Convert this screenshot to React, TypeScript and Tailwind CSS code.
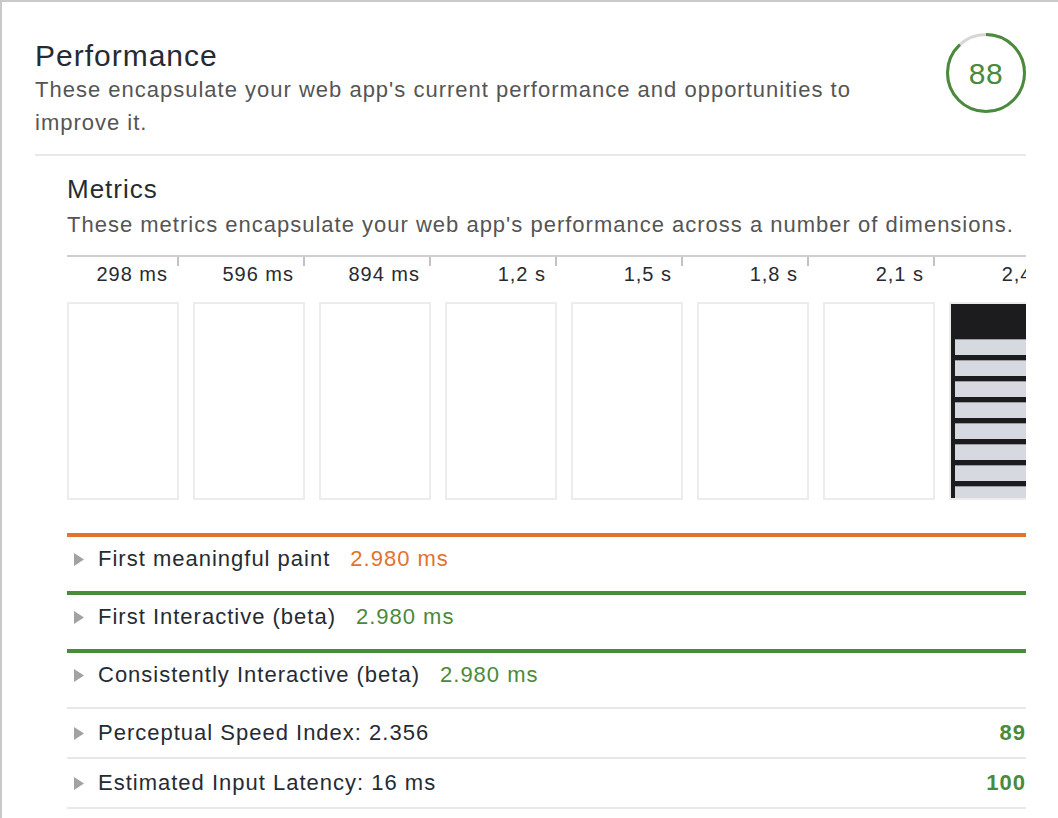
import React from 'react';

interface Row {
    label: string;
    value?: string;
    score?: string;
    bar?: 'orange' | 'green';
}

const ticks = ['298 ms', '596 ms', '894 ms', '1,2 s', '1,5 s', '1,8 s', '2,1 s', '2,4 s'];

const rows: Row[] = [
    { label: 'First meaningful paint', value: '2.980 ms', bar: 'orange' },
    { label: 'First Interactive (beta)', value: '2.980 ms', bar: 'green' },
    { label: 'Consistently Interactive (beta)', value: '2.980 ms', bar: 'green' },
    { label: 'Perceptual Speed Index: 2.356', score: '89' },
    { label: 'Estimated Input Latency: 16 ms', score: '100' },
];

function ScoreGauge({ score }: { score: number }) {
    const r = 38.5;
    const c = 2 * Math.PI * r;
    return (
        <div className="relative w-[80px] h-[80px] shrink-0">
            <svg width="80" height="80" viewBox="0 0 80 80" className="-rotate-90">
                <circle cx="40" cy="40" r={r} fill="none" stroke="#d6d6d6" strokeWidth="3" />
                <circle
                    cx="40"
                    cy="40"
                    r={r}
                    fill="none"
                    stroke="#4a8a3b"
                    strokeWidth="3"
                    strokeDasharray={`${(c * score) / 100} ${c}`}
                />
            </svg>
            <div className="absolute inset-0 flex items-center justify-center text-[30px] tracking-[0.5px] text-[#4a8a3b]">
                {score}
            </div>
        </div>
    );
}

function Frame({ filled }: { filled?: boolean }) {
    if (!filled) {
        return <div className="h-[198px] border-2 border-[#ececec] bg-white" />;
    }
    return (
        <div className="h-[198px] border-2 border-[#ececec] bg-[#1c1c1e] overflow-hidden">
            <div className="h-[35px]" />
            <div className="flex flex-col gap-[5px] pl-[4px]">
                {[0, 1, 2, 3, 4, 5, 6, 7].map(i => (
                    <div key={i} className="h-[16px] bg-[#d7d9e0] border-t border-[#9a9ca3]" />
                ))}
            </div>
        </div>
    );
}

function Arrow() {
    return (
        <span className="w-[31px] pl-[7px] flex items-center">
            <svg width="10" height="13" viewBox="0 0 10 13">
                <polygon points="0,0 10,6.5 0,13" fill="#a2a2a2" />
            </svg>
        </span>
    );
}

export default function App() {
    return (
        <div
            className="w-[1058px] h-[818px] overflow-hidden bg-white border-l-2 border-t-2 border-[#c9c9c9] text-[#262b33]"
            style={{ fontFamily: '"Liberation Sans", Arial, sans-serif' }}
        >
            <div className="pl-[33px] pr-[32px]">
                {/* header */}
                <div className="flex justify-between items-start pt-[31px] pb-[15px] border-b-2 border-[#e8e8e8]">
                    <div className="pt-[6px] w-[870px]">
                        <h1 className="text-[30px] leading-[34px] tracking-[1px]">Performance</h1>
                        <p className="text-[22px] leading-[33px] tracking-[1px] text-[#555]">
                            These encapsulate your web app's current performance and opportunities to improve it.
                        </p>
                    </div>
                    <ScoreGauge score={88} />
                </div>

                {/* metrics */}
                <div className="pl-[32px]">
                    <h2 className="text-[26px] leading-[30px] tracking-[1px] pt-[18px]">Metrics</h2>
                    <p className="text-[22px] leading-[30px] tracking-[1px] text-[#555] mt-[6px] whitespace-nowrap">
                        These metrics encapsulate your web app's performance across a number of dimensions.
                    </p>

                    <div className="mt-[15px] border-t-2 border-[#cfcfcf] overflow-hidden">
                        <div className="flex gap-[14px]">
                            {ticks.map((t, i) => (
                                <div key={t} className="w-[112px] shrink-0">
                                    <div className="flex h-[45px]">
                                        <div className="flex-1 text-right pr-[9px] pt-[5px] text-[20px] leading-[24px] tracking-[1px] whitespace-nowrap">
                                            {t}
                                        </div>
                                        <div className="w-[2px] h-[9px] bg-[#c2c2c2]" />
                                    </div>
                                    <Frame filled={i === 7} />
                                </div>
                            ))}
                        </div>
                    </div>

                    <div className="mt-[33px]">
                        {rows.map(row => (
                            <div
                                key={row.label}
                                className={
                                    row.bar === 'orange'
                                        ? 'border-t-4 border-[#e2722f] h-[58px]'
                                        : row.bar === 'green'
                                          ? 'border-t-4 border-[#4a8a3b] h-[58px]'
                                          : 'border-t-2 border-[#e8e8e8] h-[50px]'
                                }
                            >
                                <div className={`flex items-center ${row.bar ? 'pt-[10px]' : 'pt-[12px]'}`}>
                                    <Arrow />
                                    <span className="text-[22px] leading-[24px] tracking-[1px]">{row.label}</span>
                                    {row.value && (
                                        <span
                                            className={`ml-[20px] text-[22px] leading-[24px] tracking-[1px] ${
                                                row.bar === 'orange' ? 'text-[#e2722f]' : 'text-[#4a8a3b]'
                                            }`}
                                        >
                                            {row.value}
                                        </span>
                                    )}
                                    {row.score && (
                                        <span className="ml-auto text-[22px] leading-[24px] tracking-[1px] font-bold text-[#4a8a3b]">
                                            {row.score}
                                        </span>
                                    )}
                                </div>
                            </div>
                        ))}
                        <div className="border-t-2 border-[#e8e8e8]" />
                    </div>
                </div>
            </div>
        </div>
    );
}
